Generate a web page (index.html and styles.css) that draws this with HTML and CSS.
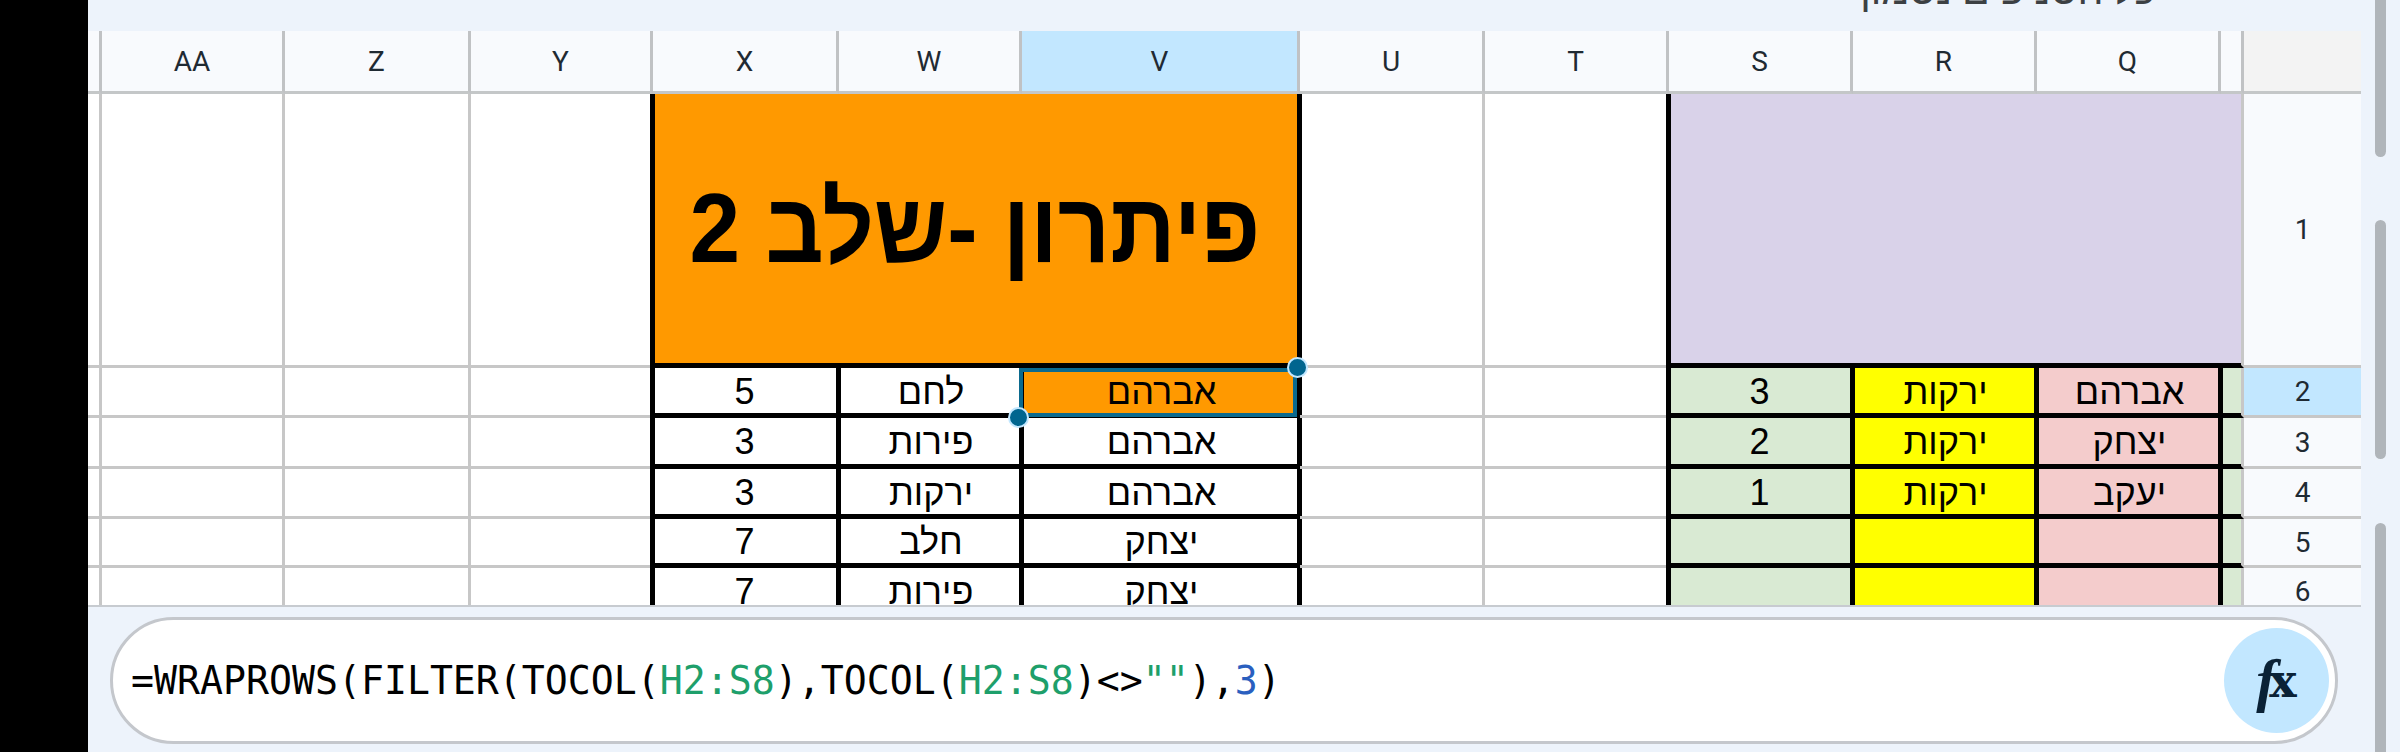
FILE: index.html
```html
<!DOCTYPE html>
<html lang="en">
<head>
    <meta charset="UTF-8">
    <title>Sheet</title>
    <link rel="stylesheet" href="styles.css">
</head>
<body>
    <div class="side"></div>
    <div class="main">
        <div class="topbar"><span class="sheet-note" dir="rtl">כל הסניפים נסמוך</span></div>

        <div class="sheet">
            <div class="grid">
                <!-- Column headers -->
                <div class="hd"></div>
                <div class="hd">AA</div>
                <div class="hd">Z</div>
                <div class="hd">Y</div>
                <div class="hd">X</div>
                <div class="hd">W</div>
                <div class="hd sel">V</div>
                <div class="hd">U</div>
                <div class="hd">T</div>
                <div class="hd">S</div>
                <div class="hd">R</div>
                <div class="hd">Q</div>
                <div class="hd"></div>
                <div class="hd corner"></div>

                <!-- Row 1 -->
                <div class="c"></div>
                <div class="c"></div>
                <div class="c"></div>
                <div class="c"></div>
                <div class="c title blk first span3" dir="rtl"><span class="title-text">פיתרון -שלב 2</span></div>
                <div class="c after"></div>
                <div class="c"></div>
                <div class="c purple blk first span4"></div>
                <div class="rh">1</div>

                <!-- Row 2 -->
                <div class="c"></div>
                <div class="c"></div>
                <div class="c"></div>
                <div class="c"></div>
                <div class="c blk first">5</div>
                <div class="c blk he">לחם</div>
                <div class="c blk he orange">אברהם</div>
                <div class="c after"></div>
                <div class="c"></div>
                <div class="c blk first green">3</div>
                <div class="c blk he yellow">ירקות</div>
                <div class="c blk he pink">אברהם</div>
                <div class="c blk last green"></div>
                <div class="rh sel">2</div>

                <!-- Row 3 -->
                <div class="c"></div>
                <div class="c"></div>
                <div class="c"></div>
                <div class="c"></div>
                <div class="c blk first">3</div>
                <div class="c blk he">פירות</div>
                <div class="c blk he">אברהם</div>
                <div class="c after"></div>
                <div class="c"></div>
                <div class="c blk first green">2</div>
                <div class="c blk he yellow">ירקות</div>
                <div class="c blk he pink">יצחק</div>
                <div class="c blk last green"></div>
                <div class="rh">3</div>

                <!-- Row 4 -->
                <div class="c"></div>
                <div class="c"></div>
                <div class="c"></div>
                <div class="c"></div>
                <div class="c blk first">3</div>
                <div class="c blk he">ירקות</div>
                <div class="c blk he">אברהם</div>
                <div class="c after"></div>
                <div class="c"></div>
                <div class="c blk first green">1</div>
                <div class="c blk he yellow">ירקות</div>
                <div class="c blk he pink">יעקב</div>
                <div class="c blk last green"></div>
                <div class="rh">4</div>

                <!-- Row 5 -->
                <div class="c"></div>
                <div class="c"></div>
                <div class="c"></div>
                <div class="c"></div>
                <div class="c blk first">7</div>
                <div class="c blk he">חלב</div>
                <div class="c blk he">יצחק</div>
                <div class="c after"></div>
                <div class="c"></div>
                <div class="c blk first green"></div>
                <div class="c blk yellow"></div>
                <div class="c blk pink"></div>
                <div class="c blk last green"></div>
                <div class="rh">5</div>

                <!-- Row 6 -->
                <div class="c"></div>
                <div class="c"></div>
                <div class="c"></div>
                <div class="c"></div>
                <div class="c blk first">7</div>
                <div class="c blk he">פירות</div>
                <div class="c blk he">יצחק</div>
                <div class="c after"></div>
                <div class="c"></div>
                <div class="c blk first green"></div>
                <div class="c blk yellow"></div>
                <div class="c blk pink"></div>
                <div class="c blk last green"></div>
                <div class="rh">6</div>
            </div>

            <!-- Selected cell V2 -->
            <div class="selection">
                <span class="handle handle-tr"></span>
                <span class="handle handle-bl"></span>
            </div>
        </div>

        <div class="formula-bar">
            <div class="formula">
                <div class="formula-text">=WRAPROWS(FILTER(TOCOL(<span class="ref">H2:S8</span>),TOCOL(<span class="ref">H2:S8</span>)&lt;&gt;<span class="ref">""</span>),<span class="num">3</span>)</div>
                <button class="fx-btn"><span class="fx-f">f</span><span class="fx-x">x</span></button>
            </div>
        </div>

        <div class="scrollbar">
            <div class="thumb thumb-a"></div>
            <div class="thumb thumb-b"></div>
            <div class="thumb thumb-c"></div>
        </div>
    </div>
</body>
</html>
```

FILE: styles.css
```css
html, body {
    margin: 0;
    height: 752px;
    overflow: hidden;
}
body {
    display: flex;
    background-color: #000;
    font-family: "Liberation Sans", Arial, sans-serif;
}
.side {
    width: 88px;
    flex: none;
}
.main {
    position: relative;
    flex: 1;
    background-color: #edf3fb;
}

/* top strip */
.topbar {
    height: 31px;
    overflow: hidden;
    display: flex;
    justify-content: flex-end;
    padding-right: 244px;
}
.sheet-note {
    font-family: Roboto, "Liberation Sans", sans-serif;
    font-size: 41px;
    line-height: 41px;
    margin-top: -30px;
    color: #3c4043;
}

/* spreadsheet */
.sheet {
    position: relative;
    width: 2273px;
    height: 576px;
    overflow: hidden;
    border-bottom: 2px solid #c7cbd0;
    box-sizing: border-box;
}
.grid {
    display: grid;
    grid-template-columns: 14px 183px 186px 182px 186px 183px 278px 185px 184px 184px 184px 184px 23px 117px;
    grid-template-rows: 63px 274px 50px 51px 50px 49px 50px;
}
.hd, .rh {
    display: flex;
    align-items: center;
    justify-content: center;
    background-color: #f8fafd;
    color: #1f2a33;
    font-family: Roboto, sans-serif;
    font-size: 28px;
    box-sizing: border-box;
    border-bottom: 3px solid #c4c7c8;
    border-right: 3px solid #c0c2c4;
}
.hd:last-child, .corner {
    background-color: #f3f3f3;
    border-right: none;
}
.rh {
    border-right: none;
    border-bottom-color: #c7c7c7;
}
.hd.sel, .rh.sel {
    background-color: #c2e7ff;
}
.c {
    display: flex;
    align-items: center;
    justify-content: center;
    box-sizing: border-box;
    background-color: #fff;
    border-right: 3px solid #c7c7c7;
    border-bottom: 3px solid #c7c7c7;
    color: #000;
    font-size: 36px;
    overflow: hidden;
    min-width: 0;
}
.he {
    padding-left: 4px;
}

/* black table borders, 5px wide and laid over the grey lines */
.blk {
    border-right-color: #000;
    border-bottom-color: #000;
    box-shadow: inset 2px -2px 0 #000;
}
.blk.first {
    box-shadow: inset 2px -2px 0 #000, -3px 0 0 #000;
}
.blk.last {
    border-right-color: #c7c7c7;
}
.after {
    box-shadow: inset 2px 0 0 #000;
}
.span3 { grid-column: span 3; }
.span4 { grid-column: span 4; }

.title {
    background-color: #f90;
    font-size: 91px;
    font-weight: bold;
    padding-bottom: 3px;
}
.title-text {
    display: inline-block;
    transform: scaleY(1.09);
}
.purple {
    background-color: #d9d2e9;
    border-right-color: #c7c7c7;
}
.orange { background-color: #f90; }
.green { background-color: #d9ead3; }
.yellow { background-color: #ff0; }
.pink { background-color: #f4cccc; }

/* selection overlay */
.selection {
    position: absolute;
    left: 931px;
    top: 337px;
    width: 278px;
    height: 49px;
    box-sizing: border-box;
    border: 4px solid #0b6a8e;
}
.handle {
    position: absolute;
    width: 17px;
    height: 17px;
    box-sizing: content-box;
    border: 2px solid #c2e7ff;
    border-radius: 50%;
    background-color: #00658f;
}
.handle-tr {
    right: -15px;
    top: -15px;
}
.handle-bl {
    left: -15px;
    bottom: -15px;
}

/* formula bar */
.formula-bar {
    padding: 10px 0 0 22px;
}
.formula {
    display: flex;
    align-items: center;
    justify-content: space-between;
    width: 2228px;
    height: 127px;
    box-sizing: border-box;
    padding: 0 6px 0 18px;
    background-color: #fff;
    border: 3px solid #c4c7cc;
    border-radius: 64px;
}
.formula-text {
    font-family: "DejaVu Sans Mono", monospace;
    font-size: 38.2px;
    color: #000;
    white-space: nowrap;
}
.ref { color: #1e9f6b; }
.num { color: #2a5fbf; }
.fx-btn {
    display: flex;
    align-items: center;
    justify-content: center;
    width: 105px;
    height: 105px;
    padding: 0;
    border: none;
    border-radius: 50%;
    background-color: #c2e7ff;
    color: #0a2236;
}
.fx-f {
    font-family: "Liberation Serif", serif;
    font-style: italic;
    font-weight: bold;
    font-size: 60px;
}
.fx-x {
    font-family: "DejaVu Serif", serif;
    font-weight: bold;
    font-size: 46px;
    margin-left: -7px;
}

/* scrollbar thumbs */
.scrollbar {
    position: absolute;
    left: 2287px;
    top: 0;
    width: 11px;
    height: 752px;
}
.thumb {
    position: absolute;
    left: 0;
    width: 11px;
    background-color: #b0b5ba;
    border-radius: 6px;
}
.thumb-a { top: -20px; height: 177px; }
.thumb-b { top: 220px; height: 239px; }
.thumb-c { top: 523px; height: 260px; }
```
